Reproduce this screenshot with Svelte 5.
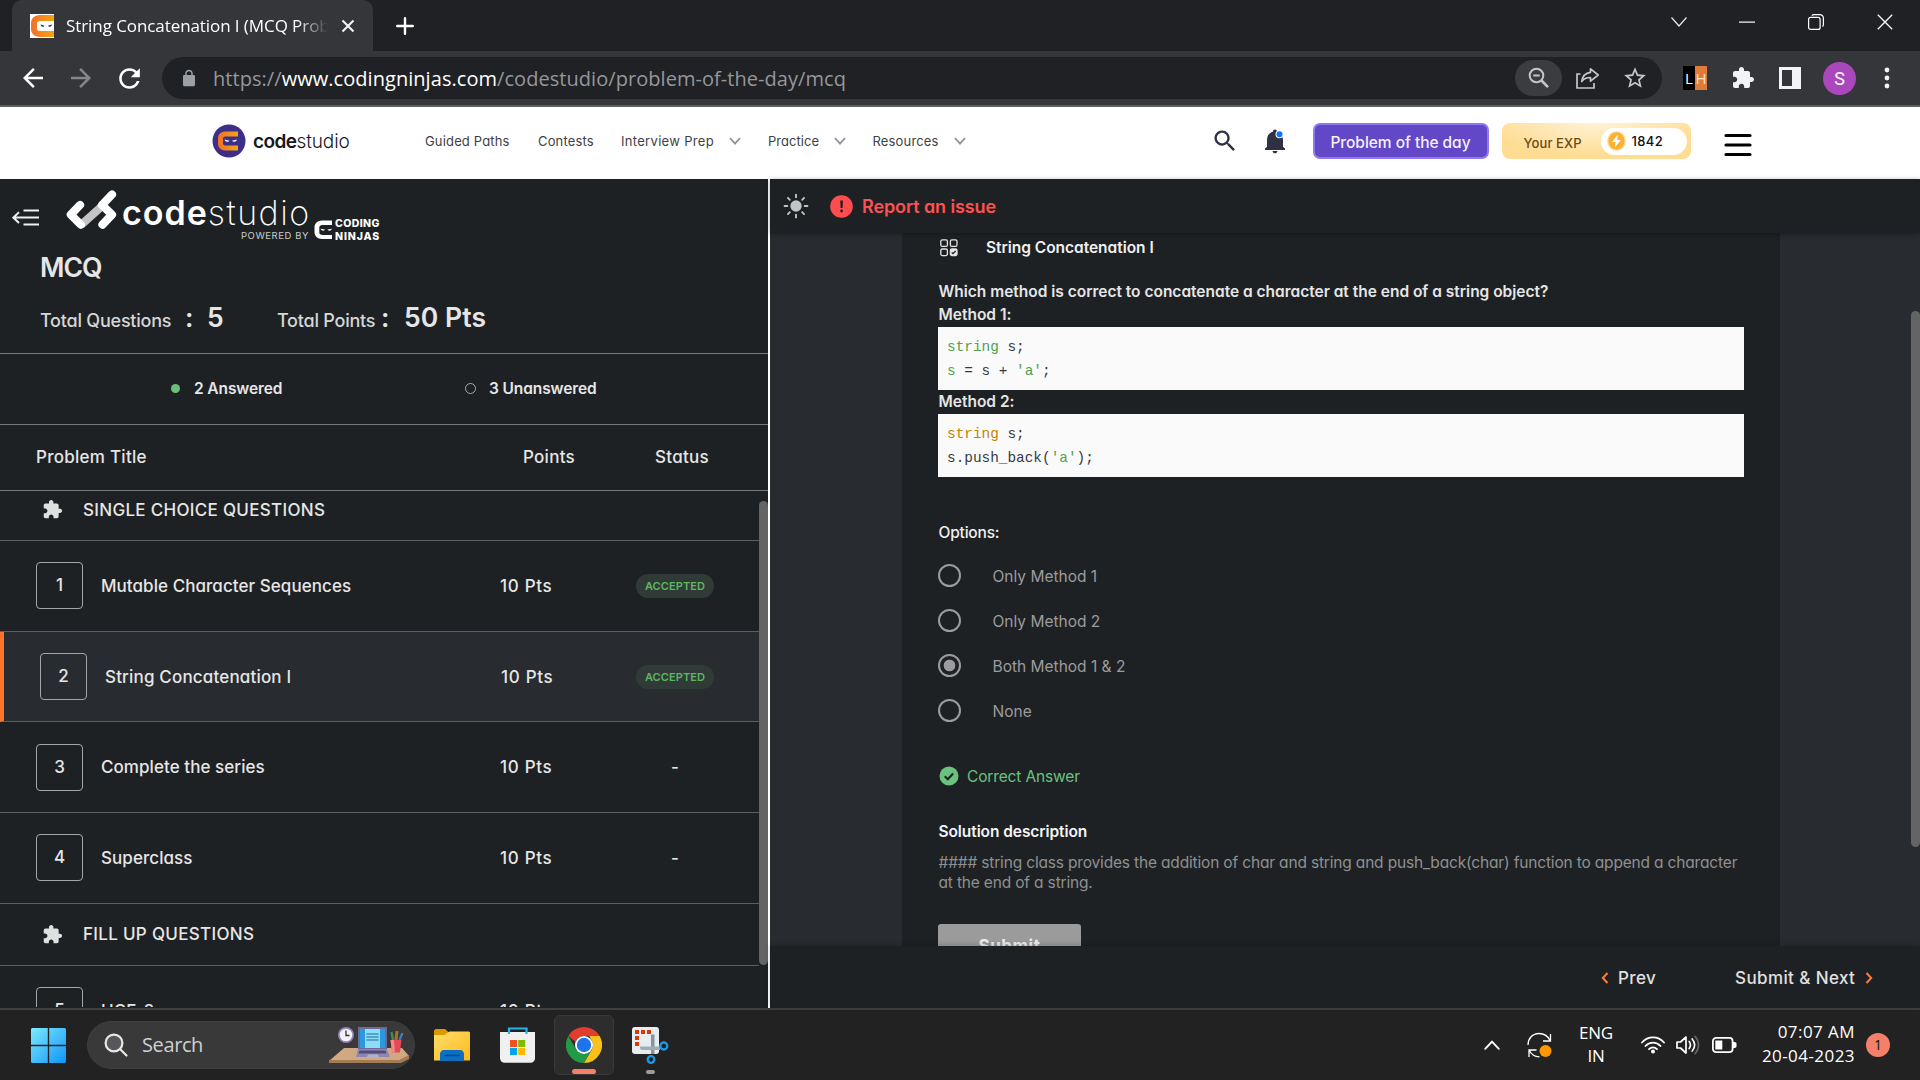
<script>
  const questions = [
    { n: 1, title: 'Mutable Character Sequences', done: true },
    { n: 2, title: 'String Concatenation I', done: true, active: true },
    { n: 3, title: 'Complete the series' },
    { n: 4, title: 'Superclass' },
  ];
  const options = ['Only Method 1', 'Only Method 2', 'Both Method 1 & 2', 'None'];
  const selected = 2;
  const rays = [0, 45, 90, 135, 180, 225, 270, 315];
  const puzzlePath =
    'M20.5 11H19V7c0-1.1-.9-2-2-2h-4V3.5C13 2.12 11.88 1 10.5 1S8 2.12 8 3.5V5H4c-1.1 0-1.99.9-1.99 2v3.8H3.5c1.49 0 2.7 1.21 2.7 2.7s-1.21 2.7-2.7 2.7H2V20c0 1.1.9 2 2 2h3.8v-1.5c0-1.49 1.21-2.7 2.7-2.7 1.49 0 2.7 1.21 2.7 2.7V22H17c1.1 0 2-.9 2-2v-4h1.5c1.38 0 2.5-1.12 2.5-2.5S21.88 11 20.5 11z';
</script>

{#snippet puzzle(size, fill)}
  <svg width={size} height={size} viewBox="0 0 24 24" {fill}><path d={puzzlePath} /></svg>
{/snippet}

{#snippet navChevron()}
  <svg width="12" height="8" viewBox="0 0 12 8" fill="none" stroke="#8f909c" stroke-width="1.8"><path d="M1 1l5 5.6L11 1" /></svg>
{/snippet}

{#snippet section(name)}
  <span class="sec-icon">{@render puzzle(21, '#dfe0e0')}</span>
  <span class="sec-name">{name}</span>
{/snippet}

<div class="screen">
  <div class="tabs">
    <div class="tab">
      <svg class="favicon" width="24" height="24" viewBox="0 0 24 24">
        <defs><linearGradient id="ninja" x1="0" x2="1"><stop offset="0" stop-color="#f0702a" /><stop offset="1" stop-color="#f4a414" /></linearGradient></defs>
        <rect width="24" height="24" fill="#fff" />
        <path d="M24 1H10C4 1 1 5 1 9v6c0 4 3 8 9 8h14v-6H10c-2 0-3-1-3-2V9c0-1 1-2 3-2h14z" fill="url(#ninja)" />
        <path d="M10.500 10.500l4 1.300c-.8 1.600-3.500 1.200-4-1.300zM22 10.500l-4 1.300c.8 1.600 3.500 1.200 4-1.300z" fill="#222" />
      </svg>
      <span class="tab-title">String Concatenation I (MCQ Prob</span>
      <svg width="14" height="14" viewBox="0 0 14 14" fill="none" stroke="#f1f3f4" stroke-width="2.1"><path d="M1.500 1.500l11 11M12.500 1.500l-11 11" /></svg>
    </div>
    <svg class="plus" width="18" height="18" viewBox="0 0 18 18" fill="none" stroke="#fff" stroke-width="2.400" stroke-linecap="round"><path d="M9 1.200v15.600M1.200 9h15.600" /></svg>
    <div class="window">
      <svg width="16" height="10" viewBox="0 0 16 10" fill="none" stroke="#e8eaed" stroke-width="1.200"><path d="M.5.5L8 9 15.500.5" /></svg>
      <svg width="16" height="2" viewBox="0 0 16 2"><path d="M0 .5h16v1.200H0z" fill="#fff" /></svg>
      <svg width="16" height="16" viewBox="0 0 16 16" fill="none" stroke="#fff" stroke-width="1.200"><rect x=".6" y="3.400" width="11.500" height="12" rx="2" /><path d="M3.800 1.600C4.300.9 5 .6 6 .6h5.500c2.300 0 3.900 1.600 3.900 3.900v6c0 .9-.3 1.500-.9 2" /></svg>
      <svg width="16" height="16" viewBox="0 0 16 16" fill="none" stroke="#fff" stroke-width="1.300"><path d="M.8.8l14.400 14.400M15.200.8L.8 15.200" /></svg>
    </div>
  </div>

  <div class="toolbar">
    <svg width="30" height="30" viewBox="0 0 24 24" fill="#fff"><path d="M20 11H7.830l5.590-5.590L12 4l-8 8 8 8 1.410-1.410L7.830 13H20v-2z" /></svg>
    <svg width="30" height="30" viewBox="0 0 24 24" fill="#85878a"><path d="M4 11h12.170l-5.590-5.590L12 4l8 8-8 8-1.410-1.410L16.170 13H4v-2z" /></svg>
    <svg width="31" height="31" viewBox="0 0 24 24" fill="#fff"><path d="M17.650 6.350C16.200 4.900 14.210 4 12 4c-4.420 0-7.990 3.580-7.990 8s3.570 8 7.990 8c3.730 0 6.840-2.550 7.730-6h-2.080c-.82 2.330-3.040 4-5.650 4-3.310 0-6-2.690-6-6s2.690-6 6-6c1.660 0 3.140.69 4.220 1.780L13 11h7V4l-2.350 2.350z" /></svg>
    <div class="omnibox">
      <svg width="18" height="18" viewBox="0 0 24 24" fill="#9aa0a6"><path d="M18.500 8H17V6c0-2.760-2.240-5-5-5S7 3.240 7 6v2H5.500C4.500 8 4 8.900 4 10v11c0 1.100.9 2 2 2h12c1.100 0 2-.9 2-2V10c0-1.100-.5-2-1.500-2zM9 8V6c0-1.660 1.340-3 3-3s3 1.340 3 3v2H9z" /></svg>
      <span class="url">https://<b>www.codingninjas.com</b>/codestudio/problem-of-the-day/mcq</span>
      <span class="zoomed"><svg width="22" height="22" viewBox="0 0 22 22" fill="none" stroke="#c4c7c9" stroke-width="2"><circle cx="8.500" cy="8.500" r="6.800" /><path d="M13.500 13.500l6.500 6.700" stroke-width="2.600" /><path d="M5.300 8.500h6.400" /></svg></span>
      <svg width="24" height="22" viewBox="0 0 24 22" fill="none" stroke="#c4c7c9" stroke-width="1.700"><path d="M4.500 7H1v14h17v-5" /><path d="M14.500 1.800l7.700 6.200-7.700 6.200v-3.700c-4 0-6.800 1.200-8.700 4 .5-5 3.700-8.500 8.700-9.200z" stroke-linejoin="round" /></svg>
      <svg width="26" height="26" viewBox="0 0 24 24" fill="#c4c7c9"><path d="M22 9.240l-7.190-.62L12 2 9.190 8.630 2 9.240l5.460 4.730L5.820 21 12 17.270 18.180 21l-1.630-7.030L22 9.240zM12 15.400l-3.760 2.270 1-4.280-3.320-2.880 4.380-.38L12 6.100l1.710 4.040 4.380.38-3.320 2.880 1 4.280L12 15.400z" /></svg>
    </div>
    <div class="lh"><span>L</span><span>H</span></div>
    {@render puzzle(24, '#f1f3f4')}
    <svg width="22" height="22" viewBox="0 0 22 22"><path d="M0 0h22v22H0zM3 3v16h10V3z" fill="#f1f3f4" fill-rule="evenodd" /></svg>
    <span class="avatar">S</span>
    <svg width="6" height="22" viewBox="0 0 6 22" fill="#f1f3f4"><circle cx="3" cy="3" r="2.400" /><circle cx="3" cy="11" r="2.400" /><circle cx="3" cy="19" r="2.400" /></svg>
  </div>

  <nav class="site">
    <svg width="34" height="34" viewBox="0 0 34 34">
      <circle cx="17" cy="17" r="16.500" fill="#3d2f86" />
      <path d="M26 7.500H13c-4 0-7 3-7 6.500v6c0 3.500 3 6.500 7 6.500h13v-5H13.500c-1.500 0-2.500-.8-2.500-2v-5c0-1.200 1-2 2.500-2H26z" fill="url(#ninja)" />
      <path d="M12.500 15.500l5 1.300c-1 1.700-4.200 1.300-5-1.300zM25 15.500l-5 1.300c1 1.700 4.200 1.300 5-1.300z" fill="#fff" />
    </svg>
    <span class="brand"><b>code</b><i>studio</i></span>
    <span class="link">Guided Paths</span>
    <span class="link">Contests</span>
    <span class="link prep">Interview Prep</span>{@render navChevron()}
    <span class="link practice">Practice</span>{@render navChevron()}
    <span class="link">Resources</span>{@render navChevron()}
    <svg width="28" height="28" viewBox="0 0 24 24" fill="#2f3044"><path d="M15.500 14h-.79l-.28-.27C15.410 12.590 16 11.110 16 9.500 16 5.910 13.090 3 9.500 3S3 5.910 3 9.500 5.910 16 9.500 16c1.610 0 3.090-.59 4.230-1.570l.27.28v.79l5 4.990L20.490 19l-4.990-5zm-6 0C7.010 14 5 11.990 5 9.500S7.010 5 9.500 5 14 7.010 14 9.500 11.990 14 9.500 14z" /></svg>
    <svg width="22" height="25" viewBox="0 0 22 25"><path d="M8.500 22h5c-.3 1.500-1.200 2.300-2.500 2.300S8.800 23.500 8.500 22zM1 21v-1.500l2-1.800V11c0-4.300 2-7.200 5.800-8.300C9 1.200 9.800.5 11 .5s2 .7 2.200 2.200C17 3.800 19 6.700 19 11v6.700l2 1.800V21z" fill="#2f3044" /><circle cx="15.500" cy="5.200" r="4" fill="#fff" /><circle cx="15.500" cy="5.200" r="3" fill="#0f73ff" /></svg>
    <button class="potd">Problem of the day</button>
    <div class="exp">
      <span>Your EXP</span>
      <div class="exp-pill">
        <svg width="19" height="20" viewBox="0 0 19 20"><ellipse cx="9.500" cy="10" rx="9.300" ry="9.800" fill="#fcd68b" /><ellipse cx="9.500" cy="10" rx="7.900" ry="8.400" fill="#fbb12f" /><path d="M10.800 3.500L5 11h3.500l-.6 5.500L14 9h-3.700z" fill="#fff" /></svg>
        <b>1842</b>
      </div>
    </div>
    <svg class="burger" width="28" height="24" viewBox="0 0 28 24" stroke="#000" stroke-width="3.200" stroke-linecap="round"><path d="M2 2.500h24M2 12h24M2 21.500h24" /></svg>
  </nav>

  <main>
    <aside>
      <header>
        <svg class="collapse" width="28" height="20" viewBox="0 0 28 20" fill="none" stroke="#f0f0f0" stroke-width="2"><path d="M11.500 2.500H27M1 9.600h26M11.500 16.500H27M7 4.200L1.300 9.600 7 15" /></svg>
        <svg class="mark" width="51" height="40" viewBox="0 0 51 40" fill="none" stroke-width="8.200" stroke-linecap="round" stroke-linejoin="round">
          <path d="M15 35L35 17" stroke="#c4c4c4" stroke-linecap="butt" />
          <path d="M14 15L4.800 24.600l10 10" stroke="#fff" /><path d="M46 4.500L36 15l10 9.600-9.500 10" stroke="#fff" />
        </svg>
        <div class="wordmark">
          <div class="big"><b>code</b><i>studio</i></div>
          <div class="powered">POWERED BY</div>
        </div>
        <svg class="ninjas-icon" width="19" height="20" viewBox="0 0 19 20"><path d="M18 .5H8C3.500.5.500 3.500.500 7.500v4.500c0 4 3 7 7.500 7h10v-4H8.500c-2 0-3.200-1-3.200-2.500V7.500C5.300 6 6.500 5 8.500 5H18z" fill="#fff" /><path d="M6.500 8.800l4.500.8c-.6 1.600-3.600 1.400-4.500-.8zM18 8.800l-4.500.8c.6 1.600 3.600 1.400 4.500-.8z" fill="#fff" /></svg>
        <div class="ninjas"><span>CODING</span><span class="nj">NINJAS</span></div>
      </header>
      <h1>MCQ</h1>
      <div class="totals">
        <span>Total Questions</span><b class="colon">:</b><b>5</b>
        <span class="tp">Total Points</span><b class="colon">:</b><b class="pts50">50 Pts</b>
      </div>
      <div class="summary">
        <span class="dot"></span><span>2 Answered</span>
        <span class="ring"></span><span>3 Unanswered</span>
      </div>
      <div class="head"><span>Problem Title</span><span>Points</span><span>Status</span></div>
      <div class="list">
        <div class="rows">
          <div class="sec first">{@render section('SINGLE CHOICE QUESTIONS')}</div>
          {#each questions as q}
            <div class="row" class:active={q.active}>
              <span class="num">{q.n}</span>
              <span class="title">{q.title}</span>
              <span class="pts">10 Pts</span>
              <span class="status">{#if q.done}<span class="badge">ACCEPTED</span>{:else}-{/if}</span>
            </div>
          {/each}
          <div class="sec">{@render section('FILL UP QUESTIONS')}</div>
          <div class="row">
            <span class="num">5</span><span class="title">HCF-2</span><span class="pts">10 Pts</span><span class="status"></span>
          </div>
        </div>
        <div class="scroll"></div>
      </div>
    </aside>

    <section class="work">
      <div class="topbar">
        <svg width="26" height="26" viewBox="-13 -13 26 26"><circle r="5.700" fill="#c3c4c4" />{#each rays as a}<path d="M8.700 0h2.700" transform="rotate({a})" stroke="#c3c4c4" stroke-width="1.900" stroke-linecap="round" />{/each}</svg>
        <svg class="alert" width="23" height="23" viewBox="0 0 23 23"><circle cx="11.500" cy="11.500" r="11.300" fill="#ff4d4f" /><path d="M10.300 5.500h2.600l-.3 7.500h-2z" fill="#1e2124" /><circle cx="11.600" cy="16" r="1.400" fill="#1e2124" /></svg>
        <span class="report">Report an issue</span>
      </div>
      <div class="stage">
        <article>
          <div class="q-head">
            <svg width="18" height="18" viewBox="0 0 18 18" fill="none" stroke="#e6e6e6" stroke-width="1.300"><rect x=".8" y=".8" width="6.600" height="6.600" rx="1.500" /><rect x="10.400" y=".8" width="6.600" height="6.600" rx="1.500" /><rect x=".8" y="10" width="6.600" height="6.600" rx="1.500" /><rect x="10.400" y="10" width="6.600" height="6.600" rx="1.500" fill="#e6e6e6" /><path d="M11.700 13.500l1.300 1.200 2.600-2.700" stroke="#1e2124" /></svg>
            <b>String Concatenation I</b>
          </div>
          <p class="strong">Which method is correct to concatenate a character at the end of a string object?</p>
          <p class="strong m1">Method 1:</p>
          <pre><span class="g">string</span> s;
<span class="g">s</span> = s + <span class="g">'a'</span>;</pre>
          <p class="strong m2">Method 2:</p>
          <pre><span class="o">string</span> s;
s.push_back(<span class="g">'a'</span>);</pre>
          <p class="opt-label">Options:</p>
          <div class="options">
            {#each options as option, i}
              <div class="option"><span class="radio" class:on={i === selected}></span><span class="label">{option}</span></div>
            {/each}
          </div>
          <div class="correct">
            <svg width="20" height="20" viewBox="0 0 20 20"><circle cx="10" cy="10" r="9.500" fill="#6bc180" /><path d="M5.800 10.300l3 2.900 5.300-5.700" fill="none" stroke="#1e2124" stroke-width="2.100" /></svg>
            <span>Correct Answer</span>
          </div>
          <p class="sol-title">Solution description</p>
          <p class="sol">#### string class provides the addition of char and string and push_back(char) function to append a character<br />at the end of a string.</p>
          <button class="submit">Submit</button>
        </article>
        <div class="page-scroll"></div>
      </div>
      <footer>
        <svg width="8" height="12" viewBox="0 0 8 12" fill="none" stroke="#ff7a33" stroke-width="2"><path d="M6.500 1L1.800 6l4.700 5" /></svg>
        <span class="prev">Prev</span>
        <span class="next">Submit &amp; Next</span>
        <svg width="8" height="12" viewBox="0 0 8 12" fill="none" stroke="#ff7a33" stroke-width="2"><path d="M1.500 1l4.700 5-4.700 5" /></svg>
      </footer>
    </section>
  </main>

  <div class="taskbar">
    <svg width="35" height="35" viewBox="0 0 35 35"><defs><linearGradient id="winblue" x1="0" y1="0" x2="1" y2="1"><stop offset="0" stop-color="#7deaff" /><stop offset="1" stop-color="#0f94f5" /></linearGradient></defs><path d="M1 0h15.800v16.800H0V1zM18.200 0H34l1 1v15.800H18.200zM0 18.200h16.800V35H1l-1-1zM18.200 18.200H35V34l-1 1H18.200z" fill="url(#winblue)" /></svg>
    <div class="search">
      <svg width="24" height="24" viewBox="0 0 24 24" fill="none" stroke="#e8e8e8" stroke-width="2.200"><circle cx="10" cy="10" r="8.400" fill="#55575a" /><path d="M16 16l6.500 6.500" stroke-linecap="round" /></svg>
      <span>Search</span>
      <svg class="desk" width="80" height="40" viewBox="0 0 80 40">
        <path d="M15 23h58l7 8-8 5H0z" fill="#d0a982" /><path d="M0 35h70l10-5v4l-8 4H0z" fill="#a37b54" />
        <circle cx="17" cy="10" r="8" fill="#8f83b8" /><circle cx="17" cy="10" r="6.300" fill="#f3f0fa" /><path d="M17 5.500V10.500h3.500" stroke="#333" stroke-width="1.300" fill="none" />
        <path d="M29 2h29v22H29z" fill="#6d6a9b" /><path d="M31 4h25v19H31z" fill="#2a9ae0" /><path d="M36 4h15v19H36z" fill="#8fdcf6" /><path d="M37.500 9h12M37.500 12h12M37.500 15h12" stroke="#3f8fc4" stroke-width="1.400" />
        <path d="M29 24h29l3 8H27z" fill="#8d88b3" /><path d="M30.500 25.500h26l1 3H29.500z" fill="#504c77" /><path d="M39 29.500h10l1 2.500H38z" fill="#b5b0d2" />
        <path d="M64 15l-1.500-8" stroke-width="2.400" stroke="#3b8f5a" /><path d="M67 15l1-9" stroke="#a2742c" stroke-width="3" /><path d="M70.500 15l3-7" stroke="#3c7fc0" stroke-width="2.300" />
        <path d="M61.500 15h11l-1.500 12.500h-8z" fill="#e34a54" /><path d="M61.500 15h3.500l1 12.500h-3z" fill="#f7858b" />
      </svg>
    </div>
    <svg width="36" height="34" viewBox="0 0 36 34"><defs><linearGradient id="folder" x1="0" y1="0" x2="1" y2="1"><stop offset="0" stop-color="#ffdc6b" /><stop offset="1" stop-color="#fcbc1c" /></linearGradient></defs><path d="M1.500 1H11l4.500 4H33v8H0V2.500z" fill="#dd9a00" /><path d="M0 7h10.500l5-3.500H35l1 1V32.500H0z" fill="url(#folder)" /><path d="M6 33v-7c0-2.300 1.700-4 4-4h16c2.300 0 4 1.700 4 4v7z" fill="#0b6fc4" /><path d="M11 27.500h14" stroke="#06488a" stroke-width="1.600" stroke-linecap="round" /></svg>
    <svg width="35" height="36" viewBox="0 0 35 36"><path d="M0 5h35v26c0 2.800-2 4.800-4.800 4.800H4.800C2 35.800 0 33.800 0 31z" fill="#f0f0f0" /><path d="M9 7V1.500h17.500V7" fill="none" stroke="#28b3ea" stroke-width="2.200" /><path d="M10 13h7v7h-7z" fill="#f25022" /><path d="M18.200 13h7v7h-7z" fill="#7fba00" /><path d="M10 21h7v7h-7z" fill="#00a4ef" /><path d="M18.200 21h7v7h-7z" fill="#ffb900" /></svg>
    <div class="app">
      <svg width="36" height="36" viewBox="0 0 48 48"><path d="M24 0c8.900 0 16.600 4.800 20.800 12H24c-5.200 0-9.600 3.300-11.300 8L3.200 12C7.400 4.800 15.100 0 24 0z" fill="#e33b2e" /><path d="M44.800 12A24 24 0 0 1 24 48l10.400-18A12 12 0 0 0 34.400 18L31 12z" fill="#fbc116" /><path d="M3.200 12A24 24 0 0 0 24 48l10.400-18c-2 3.600-6 6-10.400 6s-8.300-2.400-10.400-6z" fill="#249a48" /><circle cx="24" cy="24" r="12" fill="#fff" /><circle cx="24" cy="24" r="9.600" fill="#1f73e8" /></svg>
      <span class="bar"></span>
    </div>
    <div class="app snip">
      <svg width="37" height="37" viewBox="0 0 37 37"><rect width="27" height="27" rx="3" fill="#e8edf2" /><path d="M3 3h4v4H3zM9 3h4v4H9zM15 3h4v4h-4zM3 9h4v4H3zM3 15h4v4H3z" fill="#d83b01" /><path d="M19 7.500h3.500V27H19z" fill="#8a939c" /><path d="M8 19.500h20v3.500H10c-1.500 0-2-1-2-3.500z" fill="#a3abb3" /><circle cx="31.800" cy="19" r="3.500" fill="none" stroke="#1a9ae6" stroke-width="2.300" /><circle cx="19" cy="32.500" r="3.300" fill="none" stroke="#1a9ae6" stroke-width="2.300" /></svg>
      <span class="bar"></span>
    </div>
    <svg class="caret" width="16" height="10" viewBox="0 0 16 10" fill="none" stroke="#fff" stroke-width="1.900" stroke-linecap="round" stroke-linejoin="round"><path d="M1.200 8.800L8 1.600l6.800 7.200" /></svg>
    <svg width="26" height="26" viewBox="0 0 26 26" fill="none" stroke="#fff" stroke-width="1.300"><path d="M1 13C1 6.500 5.500 1.500 12 1.500c5 0 9 2.800 11 7M23.500 2v7h-7.500M2 25v-7h7.500M2 18c2 4 6 6.800 10.500 6.800" /><circle cx="18.500" cy="19" r="6" fill="#ff9800" stroke="none" /></svg>
    <div class="lang"><span>ENG</span><span>IN</span></div>
    <svg width="24" height="18" viewBox="0 0 24 18" fill="none" stroke="#fff" stroke-width="1.800" stroke-linecap="round"><path d="M1 6.500c6-6.800 16-6.800 22 0M4.500 10c4.200-4.600 10.800-4.600 15 0M8 13.200c2.300-2.400 5.700-2.400 8 0" /><circle cx="12" cy="15.600" r="2" fill="#fff" stroke="none" /></svg>
    <svg width="24" height="20" viewBox="0 0 24 20" fill="none" stroke="#fff" stroke-width="1.700" stroke-linecap="round" stroke-linejoin="round"><path d="M1 7v6h3.500l5.500 5V2L4.500 7z" /><path d="M13.200 6.500c1.600 2.200 1.600 4.800 0 7M16.200 4c3 3.700 3 8.300 0 12" /><path d="M19.200 1.500c4.400 5 4.400 12 0 17" stroke="#666" /></svg>
    <svg width="25" height="16" viewBox="0 0 25 16"><rect x=".9" y=".9" width="19.700" height="14.200" rx="3.200" fill="none" stroke="#fff" stroke-width="1.800" /><path d="M3.300 3.500h7v9h-7z" fill="#fff" /><path d="M21 5h1.500c1.200 0 2 .8 2 1.700v2.600c0 .9-.8 1.700-2 1.700H21z" fill="#fff" /></svg>
    <div class="clock"><span>07:07 AM</span><span class="date">20-04-2023</span></div>
    <span class="note">1</span>
  </div>
</div>

<style>
  :global(body) { background: #202124; }
  .screen { width: 1920px; height: 1080px; display: flex; flex-direction: column; overflow: hidden; font-family: Inter, "Open Sans", sans-serif; color: #e6e6e6; white-space: nowrap; }
  .screen :global(*) { font-feature-settings: "cv11"; }
  .screen :global(svg) { display: block; flex: none; }
  i { font-style: normal; }
  p, h1, pre { margin: 0; }
  button { border: 0; padding: 0; font-family: inherit; }

  .tabs { height: 51px; flex: none; display: flex; background: #202124; padding-left: 12px; }
  .tab { width: 361px; height: 51px; box-sizing: border-box; background: #35363a; border-radius: 10px 10px 0 0; display: grid; grid-template-columns: 36px 275px 1fr; align-items: center; padding-left: 18px; }
  .tab-title { font: 17px "Open Sans", sans-serif; letter-spacing: -.08px; color: #fff; overflow: hidden; width: 262px; mask-image: linear-gradient(90deg, #000 88%, transparent 100%); }
  .plus { margin: 17px 0 0 23px; }
  .window { margin-left: auto; width: 249px; height: 43px; display: grid; grid-template-columns: 68px 69px 69px 42px; align-items: center; }

  .toolbar { height: 54px; flex: none; background: #35363a; border-bottom: 2px solid #5d5e62; display: grid; grid-template-columns: 48px 48px 48px 1521px 48px 48px 44px 61px 1fr; align-items: center; padding-left: 18px; box-sizing: content-box; }
  .omnibox { width: 1500px; height: 42px; border-radius: 21px; background: #202124; display: grid; grid-template-columns: 31px 1302px 61px 46px 1fr; align-items: center; padding-left: 18px; box-sizing: border-box; }
  .omnibox { grid-template-columns: 33px 1302px 61px 46px 1fr; }
  .url { font: 20px "Open Sans", sans-serif; letter-spacing: .05px; color: #94979b; }
  .url b { font-weight: 400; color: #fff; }
  .zoomed { width: 47px; height: 36px; border-radius: 18px; background: #3b3c3f; display: flex; align-items: center; justify-content: center; }
  .lh { display: flex; width: 24px; height: 24px; font: 15px/24px "Open Sans", sans-serif; color: #fff; text-align: center; background: #000; }
  .lh span { flex: 1; }
  .lh span + span { background: #e07b39; color: #ffe3c8; }
  .avatar { width: 33px; height: 33px; border-radius: 50%; background: #ab47bc; font: 18px/33px Roboto, sans-serif; color: #fff; text-align: center; }

  .site { height: 72px; flex: none; background: #fff; display: grid; grid-template-columns: 41px 172px 113px 83px 108px 39px 66px 38.500px 81px 257px 53px 49px 189px 222px 1fr; align-items: center; padding: 0 0 4px 212px; box-sizing: border-box; color: #3f3f46; }
  .brand { font-size: 19px; color: #17171c; }
  .brand b { font-weight: 600; letter-spacing: -.55px; }
  .brand i { font-weight: 300; letter-spacing: -.12px; }
  .link { font-size: 13px; letter-spacing: .16px; }
  .prep { letter-spacing: .31px; }
  .practice { letter-spacing: .03px; }
  .potd { width: 176px; height: 36px; border-radius: 7px; border: 2px solid #9079f0; background: #6247c7; color: #f4f1ff; font-size: 15.500px; line-height: 20px; padding-top: 3px; font-weight: 500; letter-spacing: -.04px; }
  .exp { width: 189px; height: 36px; border-radius: 8px; background: radial-gradient(ellipse 60% 90% at 50% 0, #fff3d6, #ffdc93); display: grid; grid-template-columns: 77px 86px; align-items: center; padding-left: 22px; box-sizing: border-box; font-size: 13px; font-weight: 500; color: #6b4a16; }
  .exp > span { padding-top: 3px; letter-spacing: .1px; }
  .exp-pill { height: 27px; border-radius: 14px; background: #fff; display: grid; grid-template-columns: 25px 1fr; align-items: center; padding-left: 6px; color: #111; letter-spacing: .36px; }
  .exp-pill b { font-weight: 500; }
  .burger { margin-top: 8px; }

  main { height: 829px; flex: none; display: flex; background: #1e2124; }
  aside { width: 768px; border-right: 2px solid #fff; display: flex; flex-direction: column; background: #1e2124; overflow: hidden; }
  header { display: flex; height: 67px; flex: none; }
  .collapse { margin: 29px 0 0 12px; }
  .mark { margin: 11px 0 0 26px; }
  .wordmark { margin: 11px 0 0 5px; width: 187px; }
  .big { font-size: 34px; line-height: 45px; height: 41px; color: #fff; }
  .big b { letter-spacing: 1px; font-weight: 600; }
  .big i { font-weight: 200; letter-spacing: 1.500px; }
  .powered { font-size: 9.500px; line-height: 9px; letter-spacing: .56px; text-align: right; color: #ccc; }
  .ninjas-icon { margin: 41px 0 0 5px; }
  .ninjas { margin: 39px 0 0 2px; font-size: 10.500px; font-weight: 800; line-height: 12.500px; color: #fff; letter-spacing: .4px; display: flex; flex-direction: column; }
  .nj { letter-spacing: .88px; }
  h1 { height: 42px; flex: none; line-height: 42px; margin-left: 40px; font-size: 26.500px; font-weight: 600; letter-spacing: -1px; }
  .totals { height: 66px; flex: none; box-sizing: border-box; border-bottom: 1px solid #77797a; display: grid; grid-template-columns: 145px 22px 70px 104px 23px 1fr; align-items: baseline; padding: 13px 0 0 40px; line-height: 32px; font-size: 18px; font-weight: 500; letter-spacing: -.22px; color: #d6d6d6; }
  .totals b { font-size: 26.500px; font-weight: 600; letter-spacing: .07px; color: #e6e6e6; }
  .summary { height: 71px; flex: none; box-sizing: border-box; border-bottom: 1px solid #77797a; display: grid; grid-template-columns: 23px 271px 24px 1fr; align-items: center; padding: 0 0 1px 171px; font-size: 15.500px; font-weight: 600; letter-spacing: -.11px; }
  .dot { width: 9px; height: 9px; border-radius: 50%; background: #6bbf7d; }
  .ring { width: 9px; height: 9px; border-radius: 50%; border: 1px solid #aaa; }
  .head { height: 66px; flex: none; box-sizing: border-box; border-bottom: 1px solid #77797a; display: grid; grid-template-columns: 487px 132px 1fr; align-items: center; padding: 0 0 1px 36px; font-size: 17px; font-weight: 550; letter-spacing: .27px; }
  .list { height: 516px; flex: none; display: flex; overflow: hidden; }
  .rows { width: 759px; }
  .scroll { width: 9px; height: 464px; margin-top: 10px; border-radius: 5px; background: #646464; }
  .sec { height: 62px; box-sizing: border-box; border-bottom: 1px solid #5c5e60; display: grid; grid-template-columns: 41px 1fr; align-items: center; padding-left: 42px; }
  .sec.first { height: 50px; padding-bottom: 12px; }
  .sec-name { font-size: 17px; letter-spacing: .31px; font-weight: 450; }
  .row { height: 90.700px; box-sizing: border-box; border-bottom: 1px solid #5c5e60; display: grid; grid-template-columns: 65px 399px 136px 78px 1fr; align-items: center; padding-left: 36px; font-size: 17px; font-weight: 450; letter-spacing: .06px; }
  .row.active { background: #282b30; border-left: 4px solid #ff7429; grid-template-columns: 65px 396px 135px 78px 1fr; }
  .active .title { letter-spacing: .17px; }
  .num { width: 45px; height: 45px; border: 1px solid #a5a6a7; border-radius: 4px; line-height: 45px; text-align: center; }
  .pts { letter-spacing: .7px; }
  .status { text-align: center; }
  .badge { display: block; height: 24px; line-height: 24px; border-radius: 12px; background: #303b38; color: #5fb562; font-size: 11px; font-weight: 600; letter-spacing: .1px; }

  .work { width: 1150px; display: flex; flex-direction: column; background: #282b30; }
  .topbar { height: 54px; flex: none; display: grid; grid-template-columns: 47px 32px 1fr; align-items: center; padding-left: 13px; background: #1e2124; box-shadow: 0 1px 5px #0005; z-index: 1; }
  .report { color: #ff5052; font-size: 18px; font-weight: 600; letter-spacing: -.11px; }
  .stage { height: 713px; flex: none; display: flex; overflow: hidden; }
  article { width: 878px; margin-left: 132px; padding-left: 36px; box-sizing: border-box; background: #1e2124; font-size: 15.500px; }
  .q-head { height: 29px; display: grid; grid-template-columns: 46px 1fr; align-items: center; padding-left: 2px; letter-spacing: -.03px; color: #f0f0f0; }
  .q-head b { font-weight: 600; }
  .strong { font-weight: 600; line-height: 23px; margin: 18px 0 0 .500px; letter-spacing: -.01px; }
  .strong.m1 { margin-top: 0; }
  .strong.m2 { margin-top: 1px; line-height: 22px; }
  pre { width: 806px; height: 63px; box-sizing: border-box; margin-top: 1px; background: #fafafa; padding: 9px 0 0 9px; font: 14.400px/23.600px "Liberation Mono", monospace; color: #383a42; }
  .g { color: #50a14f; }
  .o { color: #c18401; }
  .opt-label { font-weight: 550; line-height: 23px; margin: 44px 0 0 .500px; letter-spacing: -.2px; color: #f0f0f0; }
  .options { margin-top: 9px; }
  .option { height: 45px; display: grid; grid-template-columns: 54.500px 1fr; align-items: center; color: #9b9c9d; }
  .label { padding-top: 2px; }
  .radio { width: 19px; height: 19px; border: 2px solid #9b9c9d; border-radius: 50%; }
  .radio.on { background: radial-gradient(circle, #9b9c9d 5.500px, transparent 6.200px); }
  .correct { height: 22px; margin-top: 32px; display: grid; grid-template-columns: 28px 1fr; align-items: center; padding-left: 1px; color: #6bc180; letter-spacing: -.14px; }
  .sol-title { font-weight: 600; line-height: 22px; margin: 34px 0 0 .500px; letter-spacing: -.08px; color: #f4f4f4; }
  .sol { line-height: 20px; margin: 10px 0 0 .500px; letter-spacing: -.17px; color: #8f9091; }
  .submit { display: block; width: 143px; height: 44px; margin-top: 31px; border-radius: 3px; background: #9b9b9b; color: #eee; font-size: 17px; font-weight: 700; letter-spacing: .53px; }
  .page-scroll { width: 9px; height: 536px; margin: 78px 0 0 131px; border-radius: 5px; background: #646464; }
  footer { height: 62px; flex: none; box-sizing: border-box; display: grid; grid-template-columns: 17px 117px 130px 1fr; align-items: center; padding: 2px 0 0 831px; background: #1e2124; font-size: 17px; font-weight: 500; letter-spacing: .4px; color: #e0e0e0; box-shadow: 0 -1px 6px #0003; z-index: 1; }

  .taskbar { height: 70px; flex: none; box-sizing: content-box; border-top: 2px solid #3f3f3f; background: #222; display: grid; grid-template-columns: 56px 347px 66px 54px 78px 852px 43px 52px 62px 35px 36px 50px 104px 1fr; align-items: center; padding-left: 31px; font-family: "Open Sans", sans-serif; color: #fff; }
  .search { width: 328px; height: 48px; border-radius: 24px; box-sizing: border-box; border: 1px solid #3e3e3e; background: #393939; display: grid; grid-template-columns: 38px 187px 1fr; align-items: center; padding-left: 16px; font-size: 20px; letter-spacing: -.39px; color: #d0d0d0; }
  .search span { padding-bottom: 2px; }
  .app { width: 60px; height: 60px; box-sizing: border-box; border-radius: 6px; border: 1px solid #383838; background: #2d2d2d; display: flex; flex-direction: column; align-items: center; padding-top: 11px; gap: 6px; }
  .bar { width: 24px; height: 5px; border-radius: 3px; background: #f4806a; }
  .snip { width: 37px; background: none; border-color: transparent; }
  .snip .bar { width: 9px; background: #9a9a9a; }
  .lang, .clock { display: flex; flex-direction: column; font-size: 17px; line-height: 23px; align-items: center; width: 34px; padding-bottom: 2px; letter-spacing: -.2px; }
  .clock { width: 93px; align-items: flex-end; line-height: 24px; letter-spacing: .44px; }
  .note { width: 24px; height: 24px; border-radius: 50%; background: #f4806a; color: #111; font-size: 14px; line-height: 24px; text-align: center; }
</style>
